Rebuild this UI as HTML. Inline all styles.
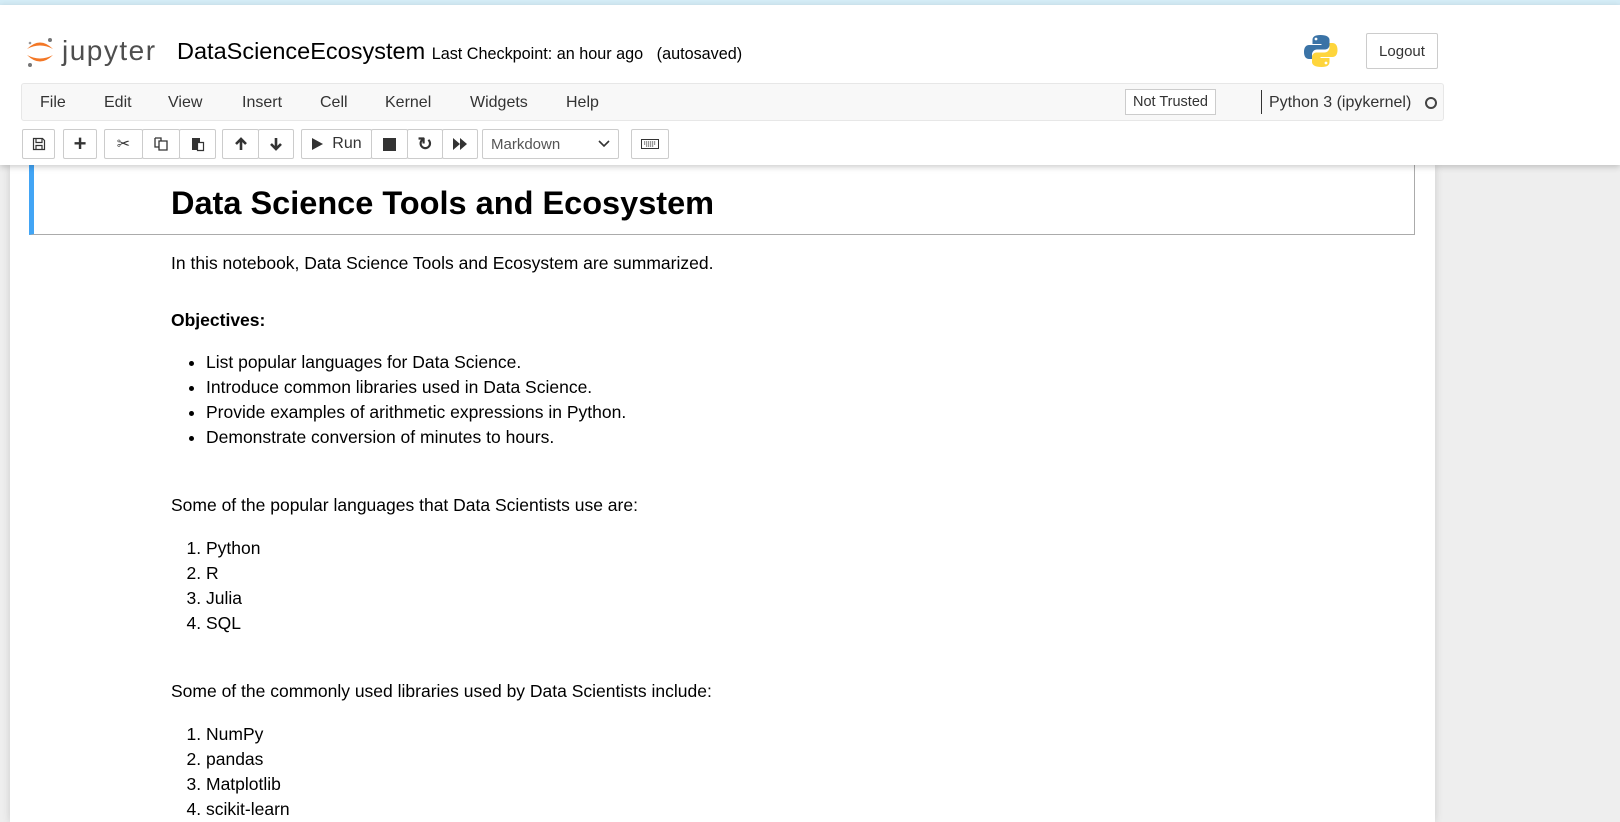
<!DOCTYPE html>
<html><head><meta charset="utf-8"><style>
*{margin:0;padding:0;box-sizing:border-box}
body{width:1620px;height:822px;overflow:hidden;background:#eee;font-family:"Liberation Sans",Arial,sans-serif;color:#000;position:relative}
.abs{position:absolute}
#top{left:0;top:0;width:1620px;height:5px;background:#d4ecf6}
#header{left:0;top:5px;width:1620px;height:160px;background:#fff;box-shadow:0 2px 6px rgba(0,0,0,.2);z-index:2}
.btn{position:absolute;top:124px;height:30px;border:1px solid #ccc;border-radius:2px;background:#fff;display:flex;align-items:center;justify-content:center;font-size:16px;color:#333}
.menu{position:absolute;top:89px;font-size:16px;color:#333}
#nb{left:10px;top:165px;width:1425px;height:657px;background:#fff;box-shadow:0 0 8px rgba(0,0,0,.15)}
.t{position:absolute;left:171px;font-size:17.5px;line-height:25px;white-space:nowrap}
ul,ol{position:absolute;font-size:17.5px;line-height:25px;white-space:nowrap}
li{padding-left:0}
</style></head><body>
<div class="abs" id="top"></div>
<div class="abs" id="header">
  <svg class="abs" style="left:24px;top:30px" width="32" height="34" viewBox="0 0 32 34">
    <path d="M3 14 Q16 1 29 14 Q16 7 3 14Z" fill="#f37726"/>
    <path d="M3 20 Q16 33 29 20 Q16 27 3 20Z" fill="#f37726"/>
    <circle cx="26" cy="5" r="2" fill="#767677"/><circle cx="6" cy="8" r="1.3" fill="#989798"/><circle cx="6" cy="30" r="2" fill="#767677"/>
  </svg>
  <div class="abs" style="left:62px;top:30px;font-size:28px;color:#4e4e4e;letter-spacing:1.5px">jupyter</div>
  <div class="abs" style="left:177px;top:33px;font-size:23.5px;color:#000">DataScienceEcosystem <span style="font-size:16.2px">Last Checkpoint: an hour ago &nbsp; (autosaved)</span></div>
  <svg class="abs" style="left:1303px;top:28px" width="36" height="36" viewBox="0 0 36 36">
    <path d="M17.5 2c-6 0-8 2-8 5v4h9v1H6c-3 0-5 2.5-5 7s2 7 5 7h3v-4.5c0-3 2.5-5 5-5h8c2.5 0 4.5-2 4.5-4.5V7c0-3-3-5-9-5z" fill="#3a73a6"/>
    <path d="M18.5 34c6 0 8-2 8-5v-4h-9v-1h12c3 0 5-2.5 5-7s-2-7-5-7h-3v4.5c0 3-2.5 5-5 5h-8C11 19.5 9 21.5 9 24v5c0 3 3 5 9.5 5z" fill="#fed53c"/>
    <circle cx="13" cy="6" r="1.4" fill="#fff"/><circle cx="23" cy="30" r="1.4" fill="#fff"/>
  </svg>
  <div class="abs" style="left:1366px;top:28px;width:72px;height:36px;border:1px solid #ccc;border-radius:2px;display:flex;align-items:center;justify-content:center;font-size:15px;color:#333">Logout</div>
  <div class="abs" style="left:21px;top:78px;width:1423px;height:38px;background:#f8f8f8;border:1px solid #e7e7e7;border-radius:3px"></div>
  <div class="menu" style="left:40px">File</div><div class="menu" style="left:104px">Edit</div><div class="menu" style="left:168px">View</div><div class="menu" style="left:242px">Insert</div><div class="menu" style="left:320px">Cell</div><div class="menu" style="left:385px">Kernel</div><div class="menu" style="left:470px">Widgets</div><div class="menu" style="left:566px">Help</div>
  <div class="abs" style="left:1125px;top:84px;width:91px;height:26px;border:1px solid #ccc;background:#fff;font-size:14.5px;color:#333;display:flex;align-items:center;justify-content:center">Not Trusted</div>
  <div class="abs" style="left:1261px;top:85px;width:1px;height:24px;background:#333"></div>
  <div class="abs" style="left:1269px;top:89px;font-size:16px;color:#333">Python 3 (ipykernel)</div>
  <div class="abs" style="left:1425px;top:92px;width:12px;height:12px;border:2px solid #444;border-radius:50%"></div>
  <div class="btn" style="left:22px;width:33px"><svg width="14" height="14" viewBox="0 0 14 14"><path d="M1.5 1.5h9l2 2v9h-11z M4 1.5v4h6v-4 M4 12.5v-4h6v4" fill="none" stroke="#333" stroke-width="1.2"/></svg></div>
  <div class="btn" style="left:63px;width:34px;font-size:22px;font-weight:bold">+</div>
  <div class="btn" style="left:104px;width:39px">✂</div>
  <div class="btn" style="left:142px;width:38px"><svg width="16" height="16" viewBox="0 0 16 16"><path d="M2 2h6v3 M2 2v9h4 M6 5h8v9H6z" fill="none" stroke="#333" stroke-width="1.3"/></svg></div>
  <div class="btn" style="left:179px;width:37px"><svg width="16" height="16" viewBox="0 0 16 16"><path d="M2 2h8v4H7v8H2z" fill="#333"/><path d="M7.5 6.5h6v8h-6z" fill="#fff" stroke="#333" stroke-width="1.2"/></svg></div>
  <div class="btn" style="left:222px;width:37px"><svg width="14" height="16" viewBox="0 0 14 16"><path d="M7 14V3 M2 8l5-5 5 5" fill="none" stroke="#333" stroke-width="2.6"/></svg></div>
  <div class="btn" style="left:258px;width:36px"><svg width="14" height="16" viewBox="0 0 14 16"><path d="M7 2v11 M2 8l5 5 5-5" fill="none" stroke="#333" stroke-width="2.6"/></svg></div>
  <div class="btn" style="left:301px;width:71px"><svg width="12" height="14" viewBox="0 0 12 14"><path d="M1 1l11 6-11 6z" fill="#333"/></svg>&nbsp;&nbsp;Run</div>
  <div class="btn" style="left:371px;width:37px"><div style="width:13px;height:13px;background:#333"></div></div>
  <div class="btn" style="left:407px;width:36px;font-weight:bold;font-size:18px">↻</div>
  <div class="btn" style="left:442px;width:36px"><svg width="16" height="14" viewBox="0 0 16 14"><path d="M1 1l7 6-7 6z M8 1l7 6-7 6z" fill="#333"/></svg></div>
  <div class="btn" style="left:482px;width:137px;justify-content:space-between;padding:0 8px;font-size:15px;color:#555">Markdown<svg width="12" height="8" viewBox="0 0 12 8"><path d="M1 1l5 5 5-5" fill="none" stroke="#333" stroke-width="1.6"/></svg></div>
  <div class="btn" style="left:631px;width:38px"><svg width="18" height="10" viewBox="0 0 18 10"><rect x=".5" y=".5" width="17" height="9" fill="none" stroke="#333"/><path d="M3 3h12M3 5h12M5 7h8" stroke="#333" stroke-width="1" stroke-dasharray="1.2 .8"/></svg></div>
</div>
<div class="abs" id="nb">
  <div class="abs" style="left:19px;top:-10px;width:1386px;height:80px;border:1px solid #ababab;border-left:5px solid #42a5f5;border-top:none"></div>
  <div class="abs" style="left:161px;top:20px;font-size:32.5px;font-weight:bold;white-space:nowrap">Data Science Tools and Ecosystem</div>
  <div class="t" style="left:161px;top:86px">In this notebook, Data Science Tools and Ecosystem are summarized.</div>
  <div class="t" style="left:161px;top:143px;font-weight:bold">Objectives:</div>
  <ul style="left:196px;top:185px;padding-left:0"><li>List popular languages for Data Science.</li><li>Introduce common libraries used in Data Science.</li><li>Provide examples of arithmetic expressions in Python.</li><li>Demonstrate conversion of minutes to hours.</li></ul>
  <div class="t" style="left:161px;top:328px">Some of the popular languages that Data Scientists use are:</div>
  <ol style="left:196px;top:371px;padding-left:0"><li>Python</li><li>R</li><li>Julia</li><li>SQL</li></ol>
  <div class="t" style="left:161px;top:514px">Some of the commonly used libraries used by Data Scientists include:</div>
  <ol style="left:196px;top:557px;padding-left:0"><li>NumPy</li><li>pandas</li><li>Matplotlib</li><li>scikit-learn</li></ol>
</div>
</body></html>
